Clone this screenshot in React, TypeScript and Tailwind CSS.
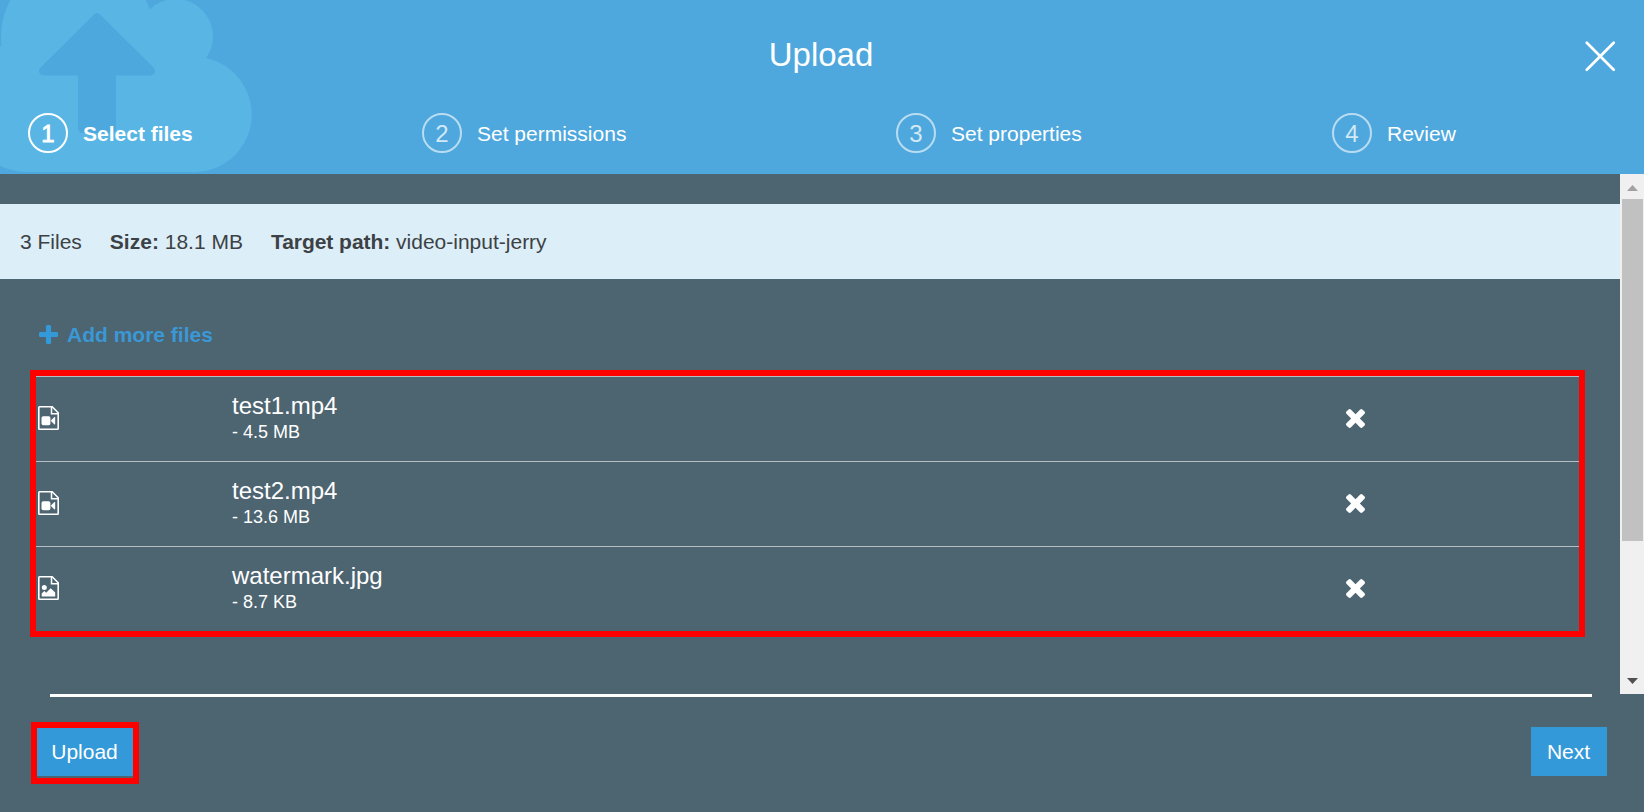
import React from "react";

const steps = [
  { n: "1", label: "Select files", active: true, width: "w-[394px]" },
  { n: "2", label: "Set permissions", active: false, width: "w-[474px]" },
  { n: "3", label: "Set properties", active: false, width: "w-[436px]" },
  { n: "4", label: "Review", active: false, width: "w-[200px]" },
];

const files = [
  { name: "test1.mp4", size: "- 4.5 MB", kind: "video" },
  { name: "test2.mp4", size: "- 13.6 MB", kind: "video" },
  { name: "watermark.jpg", size: "- 8.7 KB", kind: "image" },
];

function CloudArt() {
  return (
    <svg className="absolute left-0 top-0" width="260" height="174" viewBox="0 0 260 174">
      <g fill="#58b5e4">
        <circle cx="78" cy="37" r="77" />
        <circle cx="175.5" cy="36.5" r="37.5" />
        <circle cx="194" cy="114.5" r="57.7" />
        <circle cx="28" cy="106" r="66" />
        <rect x="28" y="50" width="166" height="122" />
      </g>
      <path
        d="M94.500 14Q97 11.800 99.500 14L153.500 67.500Q156 70.500 154.500 73.200Q153 75.500 150 75.500H116V128Q116 133 111 133H83Q78 133 78 128V75.500H44Q41 75.500 39.700 73.200Q38 70.500 40.500 67.500Z"
        fill="#4da8dd"
      />
    </svg>
  );
}

function FileIcon({ kind }: { kind: string }) {
  return (
    <svg width="21" height="24" viewBox="0 0 21 24" fill="none">
      <path
        d="M1.500 0.800H14.200L20.200 6.800V22.500Q20.200 23.200 19.500 23.200H1.500Q0.800 23.200 0.800 22.500V1.500Q0.800 0.800 1.500 0.800Z"
        stroke="#fff"
        strokeWidth="1.600"
      />
      <path d="M13.500 1V7.700H20" stroke="#fff" strokeWidth="1.500" />
      {kind === "video" ? (
        <g fill="#fff">
          <rect x="3.500" y="10.200" width="8.900" height="9" rx="1.700" />
          <path d="M12.700 14.700L16.200 11.200Q17.200 10.500 17.200 11.600V17.800Q17.200 18.900 16.200 18.200Z" />
        </g>
      ) : (
        <g fill="#fff">
          <circle cx="6.300" cy="11.500" r="2.500" />
          <path d="M3.700 20.500V17.500L6.300 15L8.200 16.700L12.700 12.200L17.200 16.500V20.500Z" />
        </g>
      )}
    </svg>
  );
}

function RemoveIcon() {
  return (
    <svg width="19" height="19" viewBox="110 90 1188 1188" fill="#fff">
      <path d="M1298 322q0 -40 -28 -68l-136 -136q-28 -28 -68 -28t-68 28l-294 294l-294 -294q-28 -28 -68 -28t-68 28l-136 136q-28 28 -28 68t28 68l294 294l-294 294q-28 28 -28 68t28 68l136 136q28 28 68 28t68 -28l294 -294l294 294q28 28 68 28t68 -28l136 -136q28 -28 28 -68t-28 -68l-294 -294l294 -294q28 -28 28 -68z" />
    </svg>
  );
}

function PlusIcon() {
  return (
    <svg width="19" height="19" viewBox="0 0 1408 1408" fill="#3399d8">
      <path d="M1408 800v-192q0 -40 -28 -68t-68 -28h-416v-416q0 -40 -28 -68t-68 -28h-192q-40 0 -68 28t-28 68v416h-416q-40 0 -68 28t-28 68v192q0 40 28 68t68 28h416v416q0 40 28 68t68 28h192q40 0 68 -28t28 -68v-416h416q40 0 68 -28t28 -68z" />
    </svg>
  );
}

function Header() {
  return (
    <header className="relative h-[174px] bg-[#4ea8dd] text-white">
      <CloudArt />
      <div className="relative flex h-[112px] items-start justify-center pt-[36px]">
        <h1 className="pr-[2px] text-[33px] leading-[38px]">Upload</h1>
        <button className="absolute left-[1585px] top-[41px]" aria-label="Close">
          <svg className="block" width="31" height="31" viewBox="0 0 31 31" fill="none">
            <path d="M1.800 1.800L28.700 28.700M28.700 1.800L1.800 28.700" stroke="#fff" strokeWidth="2.700" strokeLinecap="round" />
          </svg>
        </button>
      </div>
      <ol className="relative flex pl-7">
        {steps.map((s) => (
          <li key={s.n} className={`flex h-[42px] shrink-0 items-center ${s.width}`}>
            <span
              className={`flex size-10 items-center justify-center rounded-full text-[24px] leading-none ${
                s.active
                  ? "border-[2.500px] border-white [-webkit-text-stroke:0.8px_white]"
                  : "border-2 border-white/60 text-white/75"
              }`}
            >
              <span className="pt-[2px]">{s.n}</span>
            </span>
            <span className={`ml-[15px] pt-[2px] text-[21px] leading-6 ${s.active ? "font-bold" : ""}`}>{s.label}</span>
          </li>
        ))}
      </ol>
    </header>
  );
}

function Scrollbar() {
  return (
    <div className="flex w-6 shrink-0 flex-col items-center bg-[#f0f0f0]">
      <div className="flex h-[25px] items-center pt-[2px]">
        <svg width="11" height="6" viewBox="0 0 11 6" fill="#a2a2a2">
          <path d="M0 6L5.500 0L11 6Z" />
        </svg>
      </div>
      <div className="ml-[1px] h-[342px] w-[21px] bg-[#c1c1c1]" />
      <div className="mt-auto flex h-[25px] items-center pb-[2px]">
        <svg width="11" height="6" viewBox="0 0 11 6" fill="#505050">
          <path d="M0 0H11L5.500 6Z" />
        </svg>
      </div>
    </div>
  );
}

export default function App() {
  return (
    <div className="flex h-[812px] w-[1644px] flex-col overflow-hidden bg-[#4d6471] font-['Liberation_Sans',Arial,sans-serif]">
      <Header />
      <main className="flex h-[520px] shrink-0">
        <div className="w-[1620px] pt-[30px]">
          <div className="flex h-[75px] items-center gap-[28px] bg-[#dceef7] pl-5 text-[21px] text-[#3c4145]">
            <span>3 Files</span>
            <span><b>Size:</b> 18.1 MB</span>
            <span><b className="tracking-[-0.04px]">Target path:</b> video-input-jerry</span>
          </div>
          <button className="ml-[39px] mt-[43px] flex h-6 items-center gap-[9px] text-[21px] font-bold leading-6 text-[#3a98d6]">
            <PlusIcon />
            <span className="pt-[2px]">Add more files</span>
          </button>
          <ul className="ml-[30px] mt-6 h-[267px] w-[1555px] border-6 border-[#ff0000] text-white">
            {files.map((f) => (
              <li key={f.name} className="flex h-[85px] items-start border-t border-[#b5bec3]">
                <div className="w-[196px] pl-[2px] pt-[28.500px]"><FileIcon kind={f.kind} /></div>
                <div className="w-[1114px] pt-[15px]">
                  <div className="text-[24px] leading-7">{f.name}</div>
                  <div className="text-[18px] leading-6">{f.size}</div>
                </div>
                <button className="pt-8" aria-label="Remove"><RemoveIcon /></button>
              </li>
            ))}
          </ul>
        </div>
        <Scrollbar />
      </main>
      <footer className="flex-1">
        <div className="ml-[50px] h-[3px] w-[1542px] bg-white" />
        <div className="flex items-start justify-between pl-[31px] pr-[37px] pt-[25px] text-[21px] text-white">
          <div className="h-[62px] w-[108px] border-6 border-[#ff0000]">
            <button className="h-12 w-24 bg-[#3399d8] pr-[1px]">Upload</button>
          </div>
          <button className="mt-[5px] h-[49px] w-[76px] bg-[#3399d8] pr-[1px]">Next</button>
        </div>
      </footer>
    </div>
  );
}
